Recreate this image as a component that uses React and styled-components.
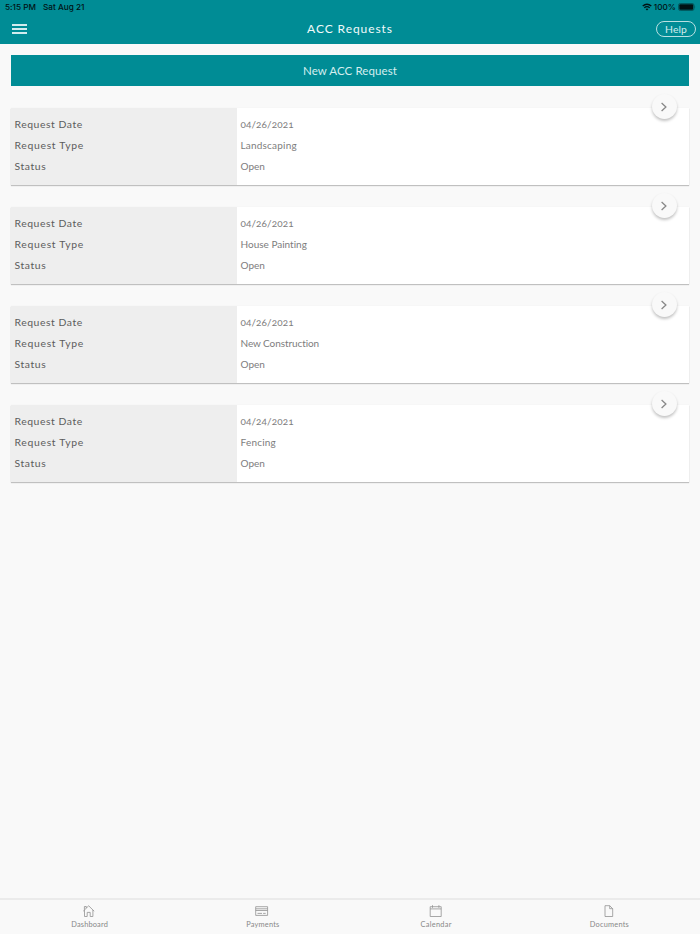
import React from "react";
import styled, { createGlobalStyle } from "styled-components";

const Global = createGlobalStyle`
  * { box-sizing: border-box; }
  body { margin: 0; background: #f9f9f9; }
  button { font: inherit; padding: 0; border: 0; cursor: pointer; }
`;

const Page = styled.div`
  width: 100%;
  height: 934px;
  display: flex;
  flex-direction: column;
  background: #f9f9f9;
  font-family: Lato, "Open Sans", sans-serif;
  font-variant-ligatures: none;
  color: #666;
`;

const Header = styled.header`
  height: 44px;
  flex: none;
  background: #008c95;
`;

const StatusBar = styled.div`
  height: 14px;
  padding: 0 4px 0 5px;
  display: flex;
  align-items: center;
  font: 500 8.2px/14px Inter, sans-serif;
  letter-spacing: 0.02px;
  color: #001214;
`;

const DateText = styled.span`
  margin-left: 7px;
  letter-spacing: 0;
`;

const DeviceState = styled.div`
  margin-left: auto;
  display: flex;
  align-items: center;
  gap: 2px;
`;

const NavBar = styled.div`
  height: 30px;
  padding: 0 4px 0 12px;
  display: grid;
  grid-template-columns: 1fr auto 1fr;
  align-items: center;
`;

const MenuButton = styled.button`
  display: flex;
  flex-direction: column;
  gap: 2px;
  width: 15px;
  background: none;
`;

const MenuLine = styled.span`
  height: 2px;
  background: #d2ecee;
`;

const Title = styled.h1`
  margin: 0 8px 0 0;
  font-size: 12px;
  line-height: 30px;
  font-weight: 400;
  letter-spacing: 0.93px;
  color: #f2fafa;
`;

const HelpButton = styled.button`
  && {
    justify-self: end;
    width: 40px;
    height: 16px;
    border: 1px solid #b9e0e2;
    border-radius: 8px;
    background: none;
    color: #d2ecee;
    font-size: 10.4px;
    line-height: 14px;
    letter-spacing: 0.1px;
  }
`;

const Main = styled.main`
  flex: 1;
  padding: 11px 11px 0;
`;

const NewRequest = styled.button`
  && {
    display: block;
    width: 100%;
    height: 31px;
    background: #008c95;
    color: #d6eeef;
    font-size: 11.5px;
    line-height: 31px;
    letter-spacing: 0.08px;
  }
`;

const List = styled.div`
  margin-top: 22px;
  display: grid;
  gap: 22px;
`;

const Card = styled.article`
  position: relative;
  height: 77px;
  display: grid;
  grid-template-columns: 226px 1fr;
  background: #fff;
  box-shadow: 0 1px 1px rgba(0, 0, 0, 0.22), 0 0 1px rgba(0, 0, 0, 0.06);
`;

const Column = styled.div`
  padding: 6px 3.5px;
  display: grid;
  grid-auto-rows: 21.2px;
  align-content: start;
  line-height: 21px;
`;

const Labels = styled(Column)`
  background: #eee;
`;

const Label = styled.span`
  font-size: 10.4px;
  font-weight: 400;
  color: #5c5c5c;
  letter-spacing: ${(p) => p.$spacing}px;
`;

const Value = styled.span`
  font-size: 10px;
  color: #7d7d7d;
  font-variant-numeric: oldstyle-nums;
  letter-spacing: ${(p) => p.$spacing}px;
`;

const OpenButton = styled.button`
  position: absolute;
  right: 12.5px;
  top: -14px;
  width: 25px;
  height: 25px;
  border-radius: 50%;
  display: grid;
  place-items: center;
  background: #f9f9f9;
  box-shadow: 0 2px 3px rgba(0, 0, 0, 0.24);
`;

const TabBar = styled.nav`
  height: 36px;
  flex: none;
  padding: 0 4px 0 3px;
  display: grid;
  grid-template-columns: repeat(4, 1fr);
  border-top: 2px solid #ebebeb;
  background: #f9f9f9;
`;

const Tab = styled.a`
  display: flex;
  flex-direction: column;
  align-items: center;
  padding-top: 4px;
  font-size: 7.4px;
  line-height: 10px;
  letter-spacing: ${(p) => p.$spacing}px;
  color: #888;
`;

const TabIcon = styled.svg`
  width: 16px;
  height: 14px;
  margin: 0 1px 2px 0;
  transform: translateX(-0.5px);
  fill: none;
  stroke: #929292;
  stroke-width: 0.8;
`;

const requests = [
  ["04/26/2021", "Landscaping", 0.2],
  ["04/26/2021", "House Painting", 0],
  ["04/26/2021", "New Construction", -0.08],
  ["04/24/2021", "Fencing", 0.2],
];

const tabs = [
  ["Dashboard", 0.17, <path d="M2.7 7.2 8.2 1.8l5.5 5.4M4 6V12.5h2.7V8.4h3v4.1h2.7V6M3.9 5.8V2.5h1.9v1.6" />],
  ["Payments", 0.2, <path d="M2.2 2.7h11.9v8.7H2.2zM2.2 4.8h11.9M2.2 6.5h11.9M4 9.4h4.5M9.6 9.4h2.6" />],
  ["Calendar", 0.27, <path d="M2.7 2.7h11v9.8h-11zM2.7 4.9h11M5 1.2v2.6M11.4 1.2v2.6" />],
  ["Documents", 0.2, <path d="M4.5 1.7h4.7l3 3v7.8H4.5zM9.2 1.7v3h3" />],
];

export default function App() {
  return (
    <Page>
      <Global />
      <Header>
        <StatusBar>
          <span>5:15 PM</span>
          <DateText>Sat Aug 21</DateText>
          <DeviceState>
            <svg width="10" height="8" viewBox="0 0 10 8" fill="none" stroke="#001214" strokeWidth="1.35">
              <path d="M.7 3.1Q5-.7 9.3 3.1M2.3 4.8Q5 2.5 7.7 4.8" />
              <path d="M3.6 6 5 7.5 6.4 6Q5 5 3.6 6Z" fill="#001214" stroke="none" />
            </svg>
            <span>100%</span>
            <svg width="18" height="8" viewBox="0 0 18 8">
              <rect x=".5" y=".5" width="15.5" height="7" rx="1.8" fill="none" stroke="#00464b" strokeWidth=".7" />
              <rect x="1.3" y="1.3" width="13.9" height="5.4" rx="1" fill="#001214" />
              <path d="M16.7 2.7q1 1.3 0 2.6z" fill="#00464b" />
            </svg>
          </DeviceState>
        </StatusBar>
        <NavBar>
          <MenuButton aria-label="Menu">
            <MenuLine />
            <MenuLine />
            <MenuLine />
          </MenuButton>
          <Title>ACC Requests</Title>
          <HelpButton>Help</HelpButton>
        </NavBar>
      </Header>
      <Main>
        <NewRequest>New ACC Request</NewRequest>
        <List>
          {requests.map(([date, type, spacing], i) => (
            <Card key={i}>
              <Labels>
                <Label $spacing={0.54}>Request Date</Label>
                <Label $spacing={0.68}>Request Type</Label>
                <Label $spacing={0.58}>Status</Label>
              </Labels>
              <Column>
                <Value $spacing={0.1}>{date}</Value>
                <Value $spacing={spacing}>{type}</Value>
                <Value $spacing={0}>Open</Value>
              </Column>
              <OpenButton aria-label="Open request">
                <svg width="8" height="10" viewBox="0 0 8 10" fill="none" stroke="#888" strokeWidth="1.3">
                  <path d="m1.6 1 4.3 4-4.3 4" />
                </svg>
              </OpenButton>
            </Card>
          ))}
        </List>
      </Main>
      <TabBar>
        {tabs.map(([name, spacing, icon]) => (
          <Tab key={name} $spacing={spacing}>
            <TabIcon viewBox="0 0 16 14">{icon}</TabIcon>
            {name}
          </Tab>
        ))}
      </TabBar>
    </Page>
  );
}
